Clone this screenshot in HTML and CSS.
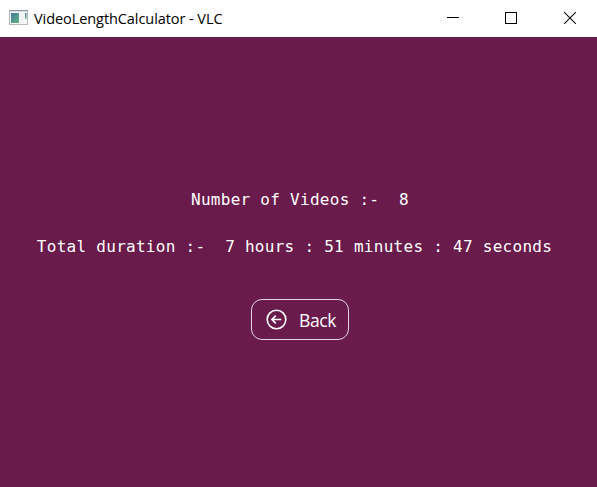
FILE: index.html
```html
<!DOCTYPE html>
<html lang="en">
<head>
<meta charset="utf-8">
<title>VideoLengthCalculator - VLC</title>
<link rel="stylesheet" href="styles.css">
</head>
<body>
<header class="titlebar">
  <svg class="app-icon" width="20" height="16" viewBox="0 0 20 16">
    <defs>
      <linearGradient id="pane" x1="0" y1="0" x2="1" y2="1"><stop offset="0" stop-color="#4978a4"/><stop offset="1" stop-color="#5fb578"/></linearGradient>
      <linearGradient id="bar" x1="0" y1="0" x2="0" y2="1"><stop offset="0" stop-color="#4978b4"/><stop offset="1" stop-color="#70bd83"/></linearGradient>
    </defs>
    <rect x=".5" y=".5" width="18" height="14" fill="#f6f7f8" stroke="#b5b9bf"/>
    <path d="M0 .5h19" stroke="#8f98a5"/>
    <path d="M1 1.5h17" stroke="#dadde2"/>
    <rect x="2" y="3" width="8" height="10" fill="url(#pane)"/>
    <rect x="11" y="3" width="4" height="10" fill="#f0f2f3"/>
    <rect x="16" y="3" width="1.5" height="6" fill="url(#bar)"/>
  </svg>
  <span class="title">VideoLengthCalculator - VLC</span>
  <svg class="controls" width="130" height="12" viewBox="0 0 130 12" fill="none" stroke="#000">
    <path d="M0 5.5h12"/>
    <rect x="58.5" y=".5" width="11" height="11"/>
    <path d="M117.2.2l11.6 11.6M128.8.2l-11.6 11.6" stroke-width="1.1"/>
  </svg>
</header>
<main class="content">
  <p class="line count">Number of Videos :-  8</p>
  <p class="line duration">Total duration :-  7 hours : 51 minutes : 47 seconds</p>
  <button class="back">
    <svg width="22" height="22" viewBox="0 0 22 22" fill="none" stroke="#fff" stroke-width="1.6">
      <circle cx="10.5" cy="10.5" r="9.3"/>
      <path d="M15.3 10.5H6.2M9.8 6.6l-3.9 3.9 3.9 3.9"/>
    </svg>
    <span class="label">Back</span>
  </button>
</main>
</body>
</html>
```
FILE: styles.css
```css
* { box-sizing: border-box; }
body {
  margin: 0;
  height: 487px;
  display: flex;
  flex-direction: column;
  overflow: hidden;
  background: #691b4b;
}
.titlebar {
  height: 37px;
  flex: none;
  display: flex;
  align-items: center;
  padding: 0 20px 1px 9px;
  background: #fff;
}
.app-icon { flex: none; }
.title {
  margin: 2px 0 0 5px;
  font: 14.5px/20px "Open Sans", sans-serif;
  letter-spacing: -0.07px;
  color: #000;
  white-space: nowrap;
}
.controls { margin-left: auto; flex: none; }
.content {
  flex: 1;
  display: flex;
  flex-direction: column;
  align-items: center;
  padding-top: 151px;
  color: #fff;
}
.line {
  margin: 0;
  font: 16px/24px "DejaVu Sans Mono", monospace;
  letter-spacing: 0.276px;
  white-space: pre;
}
.duration { margin: 23px 8px 0 0; }
.count { margin-left: 3px; }
.back {
  width: 98px;
  height: 41px;
  margin: 40px 0 0 3px;
  padding: 0 0 0 14px;
  display: flex;
  align-items: center;
  gap: 11px;
  border: 1px solid #e4d6de;
  border-radius: 11px;
  background: transparent;
  color: #fff;
  font: 17.5px/24px "Open Sans", sans-serif;
}
.label { letter-spacing: -0.4px; }
```
